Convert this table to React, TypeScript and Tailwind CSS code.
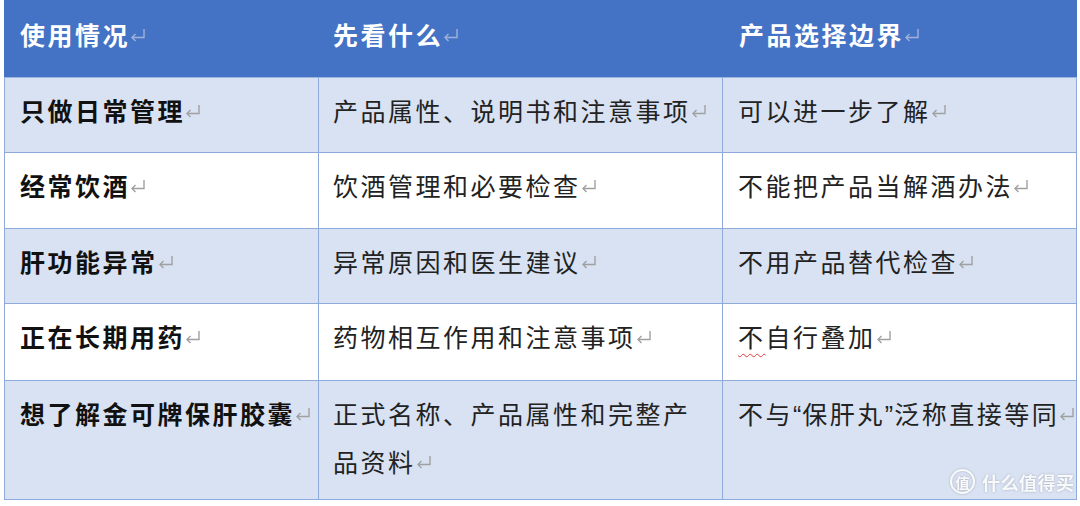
import React from "react";

type Row = { cond: string; look: React.ReactNode; limit: React.ReactNode; h: string; shade: boolean };

// Word paragraph mark (↵)
const Mark = ({ light }: { light?: boolean }) => (
    <svg
        width="16"
        height="14"
        viewBox="0 0 16 14"
        className={`inline-block align-[3px] ${light ? "text-[#9fb2da]" : "text-[#a0a0a0]"}`}
        fill="none"
        stroke="currentColor"
        strokeWidth="1.4"
    >
        <path d="M14 1v8.5H2" />
        <path d="M5.5 6L2 9.5 5.5 13" />
    </svg>
);

// narrow latin-style quotes, like Word renders them
const Q = ({ c }: { c: string }) => (
    <span className="tracking-[1px]" style={{ fontFamily: '"Liberation Sans", sans-serif' }}>
        {c}
    </span>
);

const rows: Row[] = [
    { cond: "只做日常管理", look: "产品属性、说明书和注意事项", limit: "可以进一步了解", h: "h-[74px]", shade: true },
    { cond: "经常饮酒", look: "饮酒管理和必要检查", limit: "不能把产品当解酒办法", h: "h-[76px]", shade: false },
    { cond: "肝功能异常", look: "异常原因和医生建议", limit: "不用产品替代检查", h: "h-[75px]", shade: true },
    {
        cond: "正在长期用药",
        look: "药物相互作用和注意事项",
        limit: (
            <>
                <span className="underline decoration-wavy decoration-[#e23b3b] decoration-1 underline-offset-[6px]">不</span>自行叠加
            </>
        ),
        h: "h-[77px]",
        shade: false,
    },
    {
        cond: "想了解金可牌保肝胶囊",
        look: (
            <>
                正式名称、产品属性和完整产
                <br />
                品资料
            </>
        ),
        limit: (
            <>
                不与<Q c="“" />保肝丸<Q c="”" />泛称直接等同
            </>
        ),
        h: "h-[119px]",
        shade: true,
    },
];

export default function App() {
    return (
        <div
            className="relative w-[1080px] h-[506px] bg-white overflow-hidden"
            style={{ fontFamily: '"Noto Sans CJK SC", "Noto Sans", sans-serif' }}
        >
            <div className="ml-[4px] w-[1073px] text-[25px] tracking-[2.5px]">
                {/* Header */}
                <div className="grid grid-cols-[315px_404px_354px] h-[78px] bg-[#4472c4] border-b border-[#9db3e0] text-white font-bold">
                    <div className="pl-[16px] pt-[10px] leading-[48px] whitespace-nowrap">使用情况<Mark light /></div>
                    <div className="pl-[14px] pt-[10px] leading-[48px] whitespace-nowrap">先看什么<Mark light /></div>
                    <div className="pl-[16px] pt-[10px] leading-[48px] whitespace-nowrap">产品选择边界<Mark light /></div>
                </div>

                {/* Body */}
                <div className="border-l border-r border-b border-[#8eaadb]">
                    {rows.map((r, i) => (
                        <div
                            key={i}
                            className={`grid grid-cols-[314px_404px_353px] ${r.h} ${r.shade ? "bg-[#d9e2f3]" : "bg-white"} ${i > 0 ? "border-t border-[#8eaadb]" : ""}`}
                        >
                            <div className="pl-[15px] pt-[8px] leading-[48px] font-bold text-[#111] whitespace-nowrap border-r border-[#8eaadb]">
                                {r.cond}<Mark />
                            </div>
                            <div className="pl-[14px] pt-[8px] leading-[48px] text-[#222] whitespace-nowrap border-r border-[#8eaadb]">
                                {r.look}<Mark />
                            </div>
                            <div className="pl-[15px] pt-[8px] leading-[48px] text-[#222] whitespace-nowrap">
                                {r.limit}<Mark />
                            </div>
                        </div>
                    ))}
                </div>
            </div>

            {/* Watermark */}
            <div className="absolute left-[950px] top-[469px] flex items-center gap-[7px] text-white/90 drop-shadow-[0_0_1px_rgba(0,0,0,0.25)]">
                <div className="w-[25px] h-[25px] rounded-full border-2 border-white/90 flex items-center justify-center text-[14px] font-bold leading-none">
                    值
                </div>
                <span className="text-[18px] font-bold tracking-[0.5px] leading-none">什么值得买</span>
            </div>
        </div>
    );
}
